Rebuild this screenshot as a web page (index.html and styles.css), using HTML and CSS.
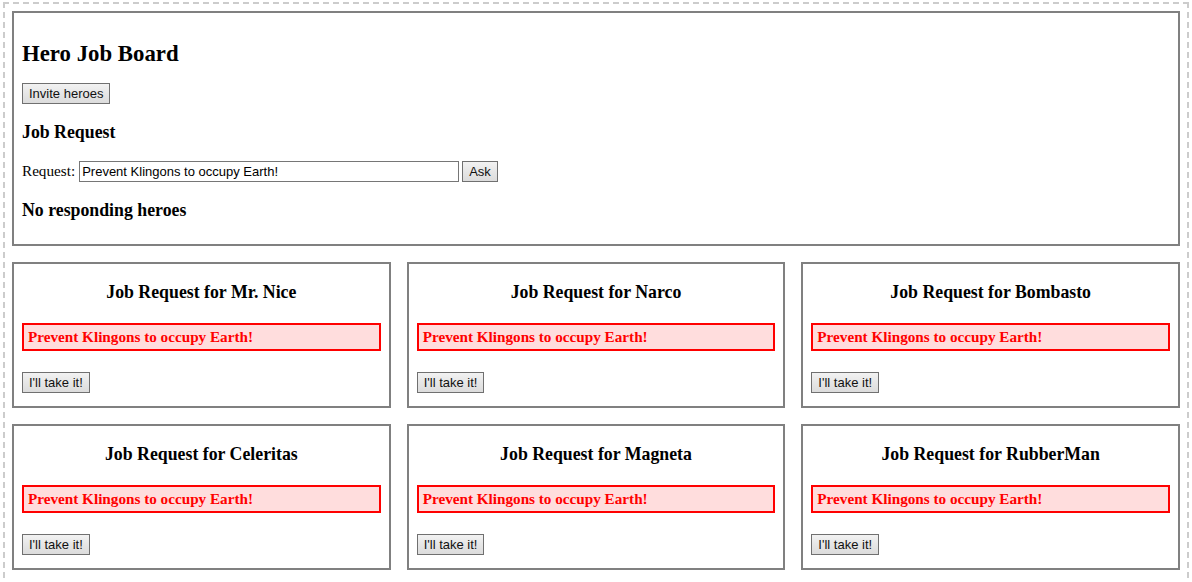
FILE: index.html
```html
<!DOCTYPE html>
<html>
<head>
<meta charset="utf-8">
<title>Hero Job Board</title>
<link rel="stylesheet" href="styles.css">
</head>
<body>
<div class="board">
  <section class="main">
    <h2 class="title">Hero Job Board</h2>
    <div class="row"><button class="btn">Invite heroes</button></div>
    <h3 class="subtitle">Job Request</h3>
    <div class="row request">
      <label class="label" for="req">Request:</label>
      <input class="field" id="req" type="text" value="Prevent Klingons to occupy Earth!">
      <button class="btn">Ask</button>
    </div>
    <h3 class="subtitle last">No responding heroes</h3>
  </section>

  <div class="card">
    <h3 class="card-title">Job Request for Mr. Nice</h3>
    <div class="job">Prevent Klingons to occupy Earth!</div>
    <button class="btn">I'll take it!</button>
  </div>
  <div class="card">
    <h3 class="card-title">Job Request for Narco</h3>
    <div class="job">Prevent Klingons to occupy Earth!</div>
    <button class="btn">I'll take it!</button>
  </div>
  <div class="card">
    <h3 class="card-title">Job Request for Bombasto</h3>
    <div class="job">Prevent Klingons to occupy Earth!</div>
    <button class="btn">I'll take it!</button>
  </div>
  <div class="card">
    <h3 class="card-title">Job Request for Celeritas</h3>
    <div class="job">Prevent Klingons to occupy Earth!</div>
    <button class="btn">I'll take it!</button>
  </div>
  <div class="card">
    <h3 class="card-title">Job Request for Magneta</h3>
    <div class="job">Prevent Klingons to occupy Earth!</div>
    <button class="btn">I'll take it!</button>
  </div>
  <div class="card">
    <h3 class="card-title">Job Request for RubberMan</h3>
    <div class="job">Prevent Klingons to occupy Earth!</div>
    <button class="btn">I'll take it!</button>
  </div>
</div>
</body>
</html>
```

FILE: styles.css
```css
html, body {
  margin: 0;
  padding: 0;
  background: #ffffff;
}

body {
  font-family: "Liberation Serif", "Times New Roman", serif;
  font-size: 15.2px;
  color: #000000;
}

.board {
  margin: 2px 3px;
  border: 2px dashed #cccccc;
  padding: 7px 7px 16px;
  display: grid;
  grid-template-columns: repeat(3, 1fr);
  gap: 16px;
}

.main {
  grid-column: 1 / -1;
  border: 2px solid #808080;
  padding: 7px 8px 8px;
}

.title {
  font-size: 22.8px;
  line-height: 27px;
  font-weight: bold;
  margin: 20px 0 16px;
}

.row {
  display: flex;
  align-items: baseline;
}

.subtitle {
  font-size: 17.8px;
  line-height: 21px;
  font-weight: bold;
  margin: 18px 0;
}

.subtitle.last {
  margin: 18px 0 15px;
}

.request {
  gap: 3px;
}

.label {
  margin-right: 1px;
}

.field {
  width: 380px;
  height: 21px;
  box-sizing: border-box;
  border: 1px solid #767676;
  padding: 1px 2px;
  font-family: "Liberation Sans", Arial, sans-serif;
  font-size: 13px;
  color: #000000;
  margin: 0;
}

.btn {
  font-family: "Liberation Sans", Arial, sans-serif;
  font-size: 13px;
  line-height: 17px;
  color: #111111;
  padding: 1px 6px;
  border: 1px solid #707070;
  border-radius: 0;
  background: linear-gradient(#f2f2f2, #e6e6e6 50%, #dcdcdc);
  margin: 0;
}

.card {
  border: 2px solid #808080;
  padding: 0 8px 13px;
  display: flex;
  flex-direction: column;
  align-items: flex-start;
}

.card-title {
  align-self: stretch;
  text-align: center;
  font-size: 17.8px;
  line-height: 21px;
  font-weight: bold;
  margin: 18px 0 20px;
}

.job {
  align-self: stretch;
  border: 2px solid #ff0000;
  background: #ffdddd;
  color: #ff0000;
  font-weight: bold;
  line-height: 18px;
  padding: 3px 4px;
  margin-bottom: 21px;
}
```
